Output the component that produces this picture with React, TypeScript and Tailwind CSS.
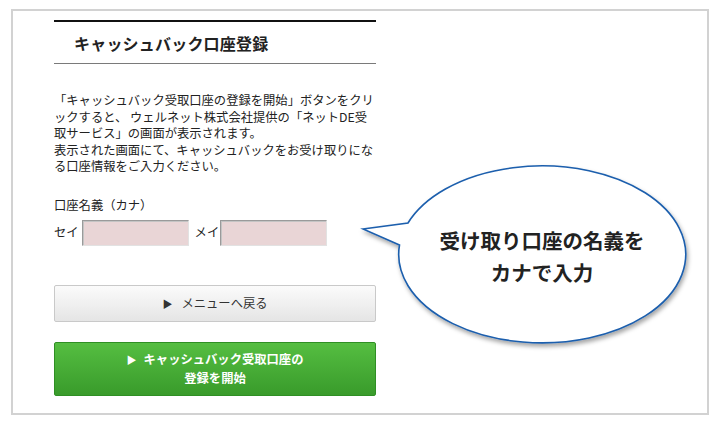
import React from "react";

export default function App() {
  return (
    <div className="relative w-[720px] h-[426px] overflow-hidden bg-white pt-[9px] pl-[11px] font-['Noto_Sans_CJK_JP','Noto_Sans',sans-serif] text-[#222]">
      <div className="w-[698px] h-[406px] border-2 border-[#d2d2d2]">
        <div className="ml-[41px] w-[322px] pt-[9px]">
          <div className="h-[44px] border-t-2 border-[#111] border-b border-b-[#7a7a7a] flex items-center pl-[20px]">
            <h1 className="text-[16px] font-bold leading-none tracking-[0.2px]">キャッシュバック口座登録</h1>
          </div>

          <p className="mt-[28px] text-[12.3px] leading-[16.6px] whitespace-nowrap">
            「キャッシュバック受取口座の登録を開始」ボタンをクリ
            <br />
            ックすると、 ウェルネット株式会社提供の「ネットDE受
            <br />
            取サービス」の画面が表示されます。
            <br />
            表示された画面にて、キャッシュバックをお受け取りにな
            <br />
            る口座情報をご入力ください。
          </p>

          <div className="mt-[22px] text-[12.3px] leading-[16.6px]">口座名義（カナ）</div>

          <div className="mt-[6px] flex items-center text-[12.3px]">
            <span>セイ</span>
            <input
              type="text"
              className="ml-[3px] w-[107px] h-[26px] bg-[#e9d5d6] border border-[#9a9a9a] border-r-[#e2e2e2] border-b-[#e2e2e2] shadow-[inset_1px_1px_0_#c4c4c4] outline-none"
            />
            <span className="ml-[6px]">メイ</span>
            <input
              type="text"
              className="ml-[1px] w-[107px] h-[26px] bg-[#e9d5d6] border border-[#9a9a9a] border-r-[#e2e2e2] border-b-[#e2e2e2] shadow-[inset_1px_1px_0_#c4c4c4] outline-none"
            />
          </div>

          <button className="mt-[39px] w-full h-[37px] rounded-[2px] border border-[#c9c9c9] bg-gradient-to-b from-[#fbfbfb] to-[#e5e5e5] flex items-center justify-center text-[12.3px] text-[#333]">
            <span className="text-[10px] mr-[9px]">▶</span>
            <span>メニューへ戻る</span>
          </button>

          <button className="mt-[20px] w-full h-[54px] rounded-[2px] border border-[#2f8f24] bg-gradient-to-b from-[#55be41] to-[#399b2b] flex flex-col items-center justify-center text-[12.3px] leading-[18px] text-white font-bold">
            <span>
              <span className="text-[10px] mr-[7px]">▶</span>キャッシュバック受取口座の
            </span>
            <span>登録を開始</span>
          </button>
        </div>
      </div>

      <svg
        className="absolute left-0 top-0 pointer-events-none"
        width="720"
        height="426"
        viewBox="0 0 720 426"
      >
        <defs>
          <filter id="bs" x="-10%" y="-10%" width="125%" height="130%">
            <feDropShadow dx="1.5" dy="3" stdDeviation="2" floodColor="#000" floodOpacity="0.35" />
          </filter>
        </defs>
        <path
          d="M363,229 L408,223 A143.5,88.5 0 1 1 399.5,245 Z"
          fill="#fff"
          stroke="#1b5ead"
          strokeWidth="1.6"
          strokeLinejoin="miter"
          filter="url(#bs)"
        />
      </svg>
      <div className="absolute left-[398px] top-[224px] w-[288px] text-center text-[20.5px] leading-[32px] font-bold text-[#222]">
        受け取り口座の名義を
        <br />
        カナで入力
      </div>
    </div>
  );
}
